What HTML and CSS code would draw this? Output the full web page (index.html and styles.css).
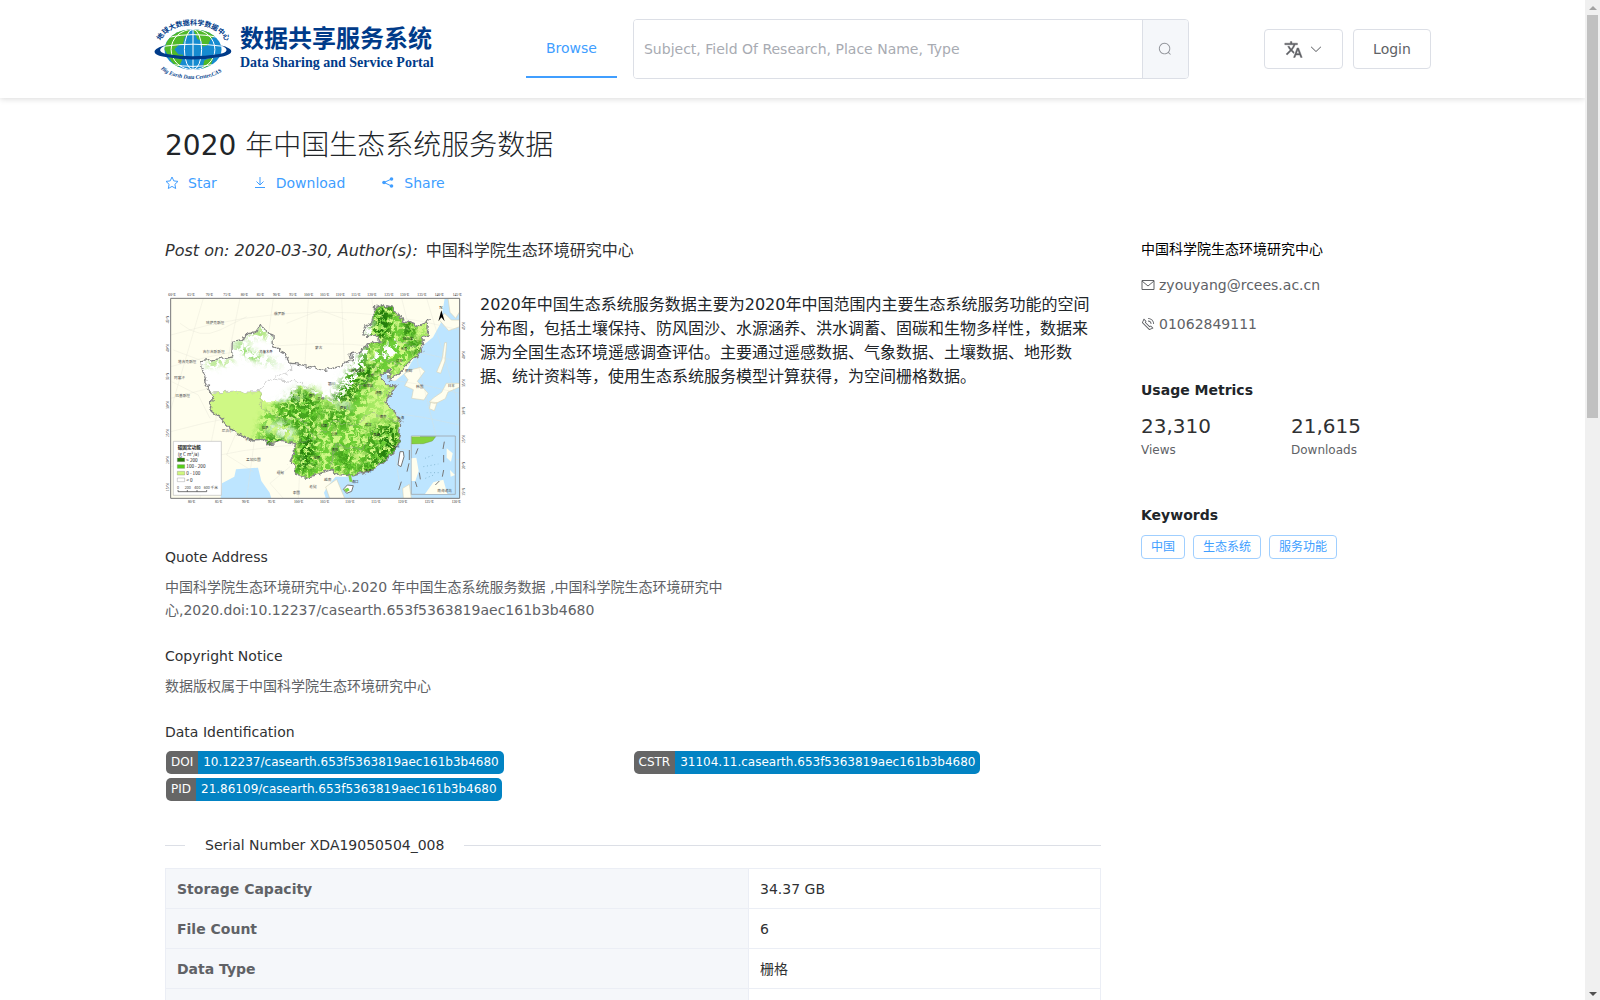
FILE: index.html
```html
<!DOCTYPE html>
<html lang="zh-CN">
<head>
<meta charset="utf-8">
<meta name="viewport" content="width=device-width, initial-scale=1">
<title>2020 年中国生态系统服务数据</title>
<link rel="stylesheet" href="styles.css">
</head>
<body>
<div class="window">
<div class="page">
  <header class="header">
    <div class="header-inner">
      <a class="logo" href="#" aria-label="Data Sharing and Service Portal">
        <svg class="globe" viewBox="0 0 234 184" aria-hidden="true">
          <defs>
            <clipPath id="ball"><ellipse cx="117" cy="92" rx="86" ry="61"/></clipPath>
            <path id="arc-top" d="M20 66 C46 2 188 2 216 68"/>
            <path id="arc-bottom" d="M20 151 C65 191 170 191 215 151"/>
          </defs>
          <g clip-path="url(#ball)">
            <rect width="234" height="184" fill="#168bd0"/>
            <path d="M30 90 45 50 75 34 107 30 104 48 92 54 87 75 72 80 61 92 73 107 87 108 83 126 72 149 52 128Z" fill="#50b929"/>
            <path d="M117 31 156 34 184 51 170 60 163 78 147 84 142 66 130 60Z" fill="#50b929"/>
            <path d="M151 125 180 112 171 139 146 149Z" fill="#50b929"/>
            <g fill="none" stroke="#fff" stroke-width="3"><ellipse cx="117" cy="92" rx="66" ry="61"/><ellipse cx="117" cy="92" rx="26" ry="61"/><path d="M117 28V156M45 55Q117 39 190 55M31 82Q117 70 204 82M34 112Q117 126 202 112M54 137Q117 149 180 137"/></g>
          </g>
          <path d="M37 79C-10 88 -12 110 39 115Q115 129 194 115C245 108 244 89 200 79C226 89 225 102 191 106Q115 119 42 106C9 101 13 87 37 79Z" fill="#003b89"/>
          <text class="globe-cn"><textPath href="#arc-top">地球大数据科学数据中心</textPath></text>
          <text class="globe-en"><textPath href="#arc-bottom">Big Earth Data Center,CAS</textPath></text>
        </svg>
        <span class="brand"><span class="brand-cn">数据共享服务系统</span><span class="brand-en">Data Sharing and Service Portal</span></span>
      </a>
      <nav class="nav"><a href="#">Browse</a></nav>
      <form class="search">
        <input type="text" aria-label="Search" placeholder="Subject, Field Of Research, Place Name, Type">
        <button type="button" aria-label="Search"><svg class="icon" viewBox="0 0 1024 1024"><path fill="currentColor" d="m795.904 750.72 124.992 124.928a32 32 0 0 1-45.248 45.248L750.656 795.904a416 416 0 1 1 45.248-45.248zM480 832a352 352 0 1 0 0-704 352 352 0 0 0 0 704z"/></svg></button>
      </form>
      <div class="account">
        <button class="btn btn-lang" type="button" aria-label="Language">
          <svg class="icon-lang" viewBox="0 0 24 24"><path fill="currentColor" stroke="currentColor" stroke-width=".5" d="m12.87 15.07-2.54-2.51.03-.03A17.52 17.52 0 0 0 14.07 6H17V4h-7V2H8v2H1v2h11.17C11.5 7.92 10.44 9.75 9 11.35 8.07 10.32 7.3 9.19 6.69 8h-2c.73 1.63 1.73 3.17 2.98 4.56l-5.09 5.02L4 19l5-5 3.11 3.11.76-2.04zM18.5 10h-2L12 22h2l1.12-3h4.75L21 22h2l-4.5-12zm-2.62 7 1.62-4.33L19.12 17h-3.24z"/></svg>
          <svg class="icon" viewBox="0 0 1024 1024"><path fill="currentColor" d="M831.872 340.864 512 652.672 192.128 340.864a30.6 30.6 0 0 0-42.752 0 29.1 29.1 0 0 0 0 41.6L489.664 714.24a32 32 0 0 0 44.672 0l340.288-331.712a29.1 29.1 0 0 0 0-41.728 30.6 30.6 0 0 0-42.752 0z"/></svg>
        </button>
        <button class="btn" type="button">Login</button>
      </div>
    </div>
  </header>

  <div class="container">
    <h1 class="title">2020 年中国生态系统服务数据</h1>
    <div class="actions">
      <a href="#"><svg class="icon" viewBox="0 0 14 14"><path fill="none" stroke="currentColor" d="m7 1 1.8 3.9 4.2.5-3.1 2.9.8 4.2L7 10.4l-3.700 2.100.8-4.200L1 5.400l4.200-.5Z"/></svg>Star</a>
      <a href="#"><svg class="icon" viewBox="0 0 14 14"><path fill="none" stroke="currentColor" d="M2 11.500h10M7 1v8M3.500 5.500 7 9l3.500-3.500"/></svg>Download</a>
      <a href="#"><svg class="icon" viewBox="0 0 14 14"><path fill="none" stroke="currentColor" d="M10.500 3 3 6.500l7.500 3.500"/><g fill="currentColor"><circle cx="10.500" cy="3" r="1.800"/><circle cx="3" cy="6.500" r="1.800"/><circle cx="10.500" cy="10" r="1.800"/></g></svg>Share</a>
    </div>

    <div class="columns">
      <main class="main">
        <p class="byline"><em>Post on: 2020-03-30, Author(s):</em><span>中国科学院生态环境研究中心</span></p>
        <div class="summary">
          <svg class="map" viewBox="45 30 903 645" role="img" aria-label="中国生态系统服务空间分布图">
            <defs>
              <clipPath id="frame"><rect x="62" y="55" width="867" height="600"/></clipPath>
              <path id="china" d="m152 245 33-5 30-5 33-8 2-40 30-6 8-20 27-2 15-21 14 8 3 11 22 8 1 35 30 17 19 32 45 7 57 15 50-12 12-10 22-8-4-20 31-4 19-25 41-9-23-16-30-2 2-20 24-16 8-46 28-8 29 7 18 31 44 20 10 7 35-21-6 46-18 20 5 27-26 24-29 29-25 24-17 11-3-31-27 21 9 11 20 19 19-2-24 32-10 19 30 31 20 29-5 41-15 40-35 40-50 25-42 13-47-4-15-16-46 16-30 8-32-6-3-29-17-9 14-27 4-30-37-10-48 14-12-17-38 2-50-27-40-40-31-25 8-38-18-42-9-28Z"/>
              <clipPath id="land"><use href="#china"/></clipPath>
              <filter id="rough" x="-5%" y="-5%" width="110%" height="110%"><feTurbulence type="fractalNoise" baseFrequency=".05" numOctaves="3" seed="4"/><feDisplacementMap in="SourceGraphic" scale="22" xChannelSelector="R" yChannelSelector="G"/></filter>
              <filter id="soft" x="-20%" y="-20%" width="140%" height="140%"><feGaussianBlur in="SourceGraphic" stdDeviation="10" result="b"/><feTurbulence type="fractalNoise" baseFrequency=".06" numOctaves="5" seed="7"/><feColorMatrix values="0 0 0 0 0 0 0 0 0 0 0 0 0 0 0 0 0 0 7 -2.900" result="t"/><feComposite in="b" in2="t" operator="in"/></filter>
              <filter id="speck" x="-20%" y="-20%" width="140%" height="140%"><feGaussianBlur in="SourceGraphic" stdDeviation="9" result="b"/><feTurbulence type="fractalNoise" baseFrequency=".08" numOctaves="5" seed="21"/><feColorMatrix values="0 0 0 0 0 0 0 0 0 0 0 0 0 0 0 0 7 0 0 -2.900" result="t"/><feComposite in="b" in2="t" operator="in"/></filter>
            </defs>
            <g clip-path="url(#frame)">
              <path fill="#fffeee" d="M62 55h867v600H62z"/>
              <path fill="#bde5ff" d="M929 55h-45l-12 75-23 42-25 20-40 55-15 28-34 28-17-4-12-28-32 22 20 28 8 52 38 55-8 70-65 66-68 26-42 0-26 30-9 18 12 38h424ZM212 655l4-45 37-20 5-22 66-5 10 40 25 35 5 17Z"/>
              <path fill="#fffeee" stroke="#d8d5bd" stroke-width="2" d="m777 271-15 12 12 16-10 18 26 12-5 26 37 5 12-20-32-36 22-30-12-12ZM894 55l6 42 17 18 12-20V55ZM868 120l28 32 33-12v-20l-25 0-20-20ZM884 188l-8 50-16 38 12 4 13-37 5-55ZM929 310l-40 0-14 27-25 17-12 12 18 5 30-15 8-20 35-15ZM842 366l-4 20 15 6 8-24ZM560 598l24 57h-45l-12-34ZM760 655l-2-30 20-12 6 42Z"/>
              <g fill="none" stroke="#e2e2d6"><path d="M62 165Q500 35 929 150M62 260Q500 130 929 245M62 355Q500 225 929 340M62 455Q500 330 929 435M62 560Q500 435 929 540M160 55 62 390M270 55 150 655M370 55 290 655M475 55 445 655M575 55l25 600M665 55l90 600M755 55l150 600M830 55l99 330"/><path d="M90 130q60 50 120 20t80-40M70 210l80 30M260 455l-30 70 80 50M420 560l-60 50 40 45M590 120l-80-30-100 40M65 305l80 40 35 70"/></g>
              <g filter="url(#rough)">
                <use href="#china" fill="#fff"/>
                <g clip-path="url(#land)">
                  <path fill="#cff885" d="m180 338 150-2 8 28 70 0 40-45 50 30 60 30 45-60 40-60 10-60 20-60V50h200v200l-80 100v300H400L300 500 170 420Z"/>
                  <path fill="#fff" d="m690 200 45-25 15 40-60 35-30-10Z"/>
                  <g filter="url(#soft)">
                    <path fill="#a6e963" d="m400 370 90-50 50 40 80-20 60-90 10-190h150v200l-100 80 30 320H420l10-120-110-20Z"/>
                    <path fill="#6cce34" d="m340 400 75-65 80 10 30 60 75-60 60-110 30-80-15-90 55 0 20 45 40 30 20 60-50 60-90 50-40 100 40 50 80 0 0 100-110 90-190-15-45-100-100-20ZM248 195l20-5 70 45 70 20-100-15Z"/>
                    <path fill="#8cda4a" d="m290 175 40-35 40 40-50-15-30 25ZM165 245l90-10-20 15-65 10Z"/>
                  </g>
                  <g filter="url(#speck)">
                    <path fill="#45a51d" d="m672 75 60 0-5 100-60 20-18 60-40 80-35 35-30-10 30-60 50-60 40-100ZM380 380l70-60 70 50-20 50 0 150-60 10 5-120-60-30ZM520 380l80 0 0 60-70 10ZM680 430l70-10 0 85-80 70-60 10 40-60-25-40ZM550 500l60 0 0 70-50 10ZM755 115h40v75l30 10-20 50-30-50Z"/>
                    <path fill="#237c08" d="M682 72h40l-5 100-38 15ZM760 125h25v40l-25-5ZM795 185h25v30l-25-5ZM655 255h35l-25 40-35 25-20 50-55-5 30-30 25 5 15-50ZM345 475l50-10 20 35-70 0ZM455 470l35-10-5 110-45 5ZM430 340l55 15-10 20-40-10ZM700 440l40-5 0 55-30 60-50 10 30-50Z"/>
                  </g>
                  <path filter="url(#soft)" fill="#fff" d="m350 430 60 0 35 45-30 0-60-25ZM555 365l50 0 0 15-50 0ZM350 330l60-15 50 40-80 10Z"/>
                  <path fill="none" stroke="#999" stroke-width="2" stroke-opacity=".7" d="m190 338 140-3 20-30 75-35 0-22M330 335l5 50 60 35 60-5 40 60-60 15M375 298l80 10 80 55 60-55 50 10 40-60M500 470l55-45 60 15 50-40 85 25M540 565l20-70 75 15 45-70M640 300l50 40 50-15M690 183l5 50 60 25M730 180l70 25M600 400l-10-60"/>
                </g>
                <use href="#china" fill="none" stroke="#858585" stroke-width="4"/>
              </g>
              <path fill="#fff" stroke="#777" stroke-width="3" d="m580 628 12-13 18 2-5 17-15 6ZM750 515l10 0 2 15-9 30-9-5Z"/>
              <path fill="#7bd246" d="m582 628 12-5 5 8-10 6ZM595 585l8 0 4 20-8 0Z"/>
              <path fill="none" stroke="#777" stroke-width="3" d="m754 605-8 25M777 550l-6 25M778 510v30"/>
            </g>
            <g><path fill="#bde5ff" stroke="#999" stroke-width="2" d="M784 468h132v175H784z"/><path fill="#fffeee" d="M785 468h25v25h-25ZM785 535l14-2 7 40-10 30-11 0ZM890 505l18 15-5 25-13-12ZM825 642l25-35 30-8 12 43ZM900 570l15 15-13 5Z"/><path fill="#84d33d" stroke="#687f40" d="m785 470 72 0-10 13-27 8-35 1Z"/><path fill="none" stroke="#777" stroke-width="3" d="m883 485-4 22M881 525v22M881 570l-4 20M868 603l-12 12M808 578l3 20M796 605l5 16M804 505l-7 18"/><path fill="none" stroke="#6ba5bf" stroke-width="2" stroke-dasharray="3 8" d="m825 535 25-10M820 560l45-8M830 578l36 0M826 595l30-12"/></g>
            <path fill="#fff" stroke="#bbb" stroke-width="2" d="M70 484h144v162H70z"/>
            <g stroke="#777"><path fill="#277d08" d="M82 534h22v11H82z"/><path fill="#56d018" d="M82 554h22v11H82z"/><path fill="#cff77e" d="M82 574h22v11H82z"/><path fill="#fff" d="M82 594h22v11H82z"/></g>
            <g class="map-legend"><text x="83" y="507" class="map-head">碳固定功能</text><text x="83" y="527">(g C m²/a)</text><text x="109" y="545">&gt; 200</text><text x="109" y="565">100 - 200</text><text x="109" y="585">0 - 100</text><text x="109" y="605">&lt; 0</text></g>
            <g class="map-scale"><text x="81" y="626">0</text><text x="104" y="626">200</text><text x="133" y="626">400</text><text x="161" y="626">600 千米</text></g>
            <path fill="none" stroke="#333" stroke-width="2" d="M84 630v5h86v-5M112 630v5M141 630v5"/>
            <path fill="none" stroke="#777" stroke-width="3" d="M62 55h867v600H62z"/>
            <g class="map-place"><text x="372" y="104">俄罗斯</text><text x="168" y="131">哈萨克斯坦</text><text x="495" y="206">蒙古</text><text x="158" y="219">吉尔吉斯斯坦</text><text x="84" y="248">塔吉克斯坦</text><text x="72" y="297">阿富汗</text><text x="76" y="350">巴基斯坦</text><text x="215" y="457">尼泊尔</text><text x="285" y="482">不丹</text><text x="288" y="543">孟加拉国</text><text x="380" y="581">缅甸</text><text x="428" y="641">泰国</text><text x="478" y="624">老挝</text><text x="522" y="604">越南</text><text x="765" y="276">朝鲜</text><text x="798" y="324">韩国</text><text x="893" y="322">日本</text><text x="862" y="637">南海诸岛</text></g>
            <g class="map-city"><text x="328" y="218">乌鲁木齐</text><text x="604" y="276">呼和浩特</text><text x="652" y="292">北京</text><text x="640" y="320">石家庄</text><text x="534" y="316">银川</text><text x="477" y="352">西宁</text><text x="502" y="359">兰州</text><text x="570" y="388">西安</text><text x="675" y="342">济南</text><text x="690" y="413">南京</text><text x="742" y="417">上海</text><text x="738" y="246">沈阳</text><text x="752" y="209">长春</text><text x="759" y="181">哈尔滨</text><text x="512" y="442">成都</text><text x="543" y="466">重庆</text><text x="645" y="438">武汉</text><text x="670" y="468">南昌</text><text x="545" y="513">贵阳</text><text x="490" y="536">昆明</text><text x="728" y="503">福州</text><text x="644" y="577">香港</text><text x="605" y="608">海口</text><text x="335" y="446">拉萨</text></g>
            <g class="map-axis"><text x="55" y="48">60°E</text><text x="112" y="48">65°E</text><text x="167" y="48">70°E</text><text x="220" y="48">75°E</text><text x="272" y="48">80°E</text><text x="320" y="48">85°E</text><text x="369" y="48">90°E</text><text x="418" y="48">95°E</text><text x="462" y="48">100°E</text><text x="510" y="48">105°E</text><text x="557" y="48">110°E</text><text x="604" y="48">115°E</text><text x="652" y="48">120°E</text><text x="703" y="48">125°E</text><text x="750" y="48">130°E</text><text x="802" y="48">135°E</text><text x="854" y="48">140°E</text><text x="908" y="48">145°E</text><text x="114" y="668">80°E</text><text x="195" y="668">85°E</text><text x="276" y="668">90°E</text><text x="354" y="668">95°E</text><text x="432" y="668">100°E</text><text x="510" y="668">105°E</text><text x="586" y="668">110°E</text><text x="664" y="668">115°E</text><text x="744" y="668">120°E</text><text x="824" y="668">125°E</text><text x="905" y="668">130°E</text><text transform="translate(58 130)rotate(-90)">45°N</text><text transform="translate(58 216)rotate(-90)">40°N</text><text transform="translate(58 301)rotate(-90)">35°N</text><text transform="translate(58 387)rotate(-90)">30°N</text><text transform="translate(58 471)rotate(-90)">25°N</text><text transform="translate(58 552)rotate(-90)">20°N</text><text transform="translate(58 633)rotate(-90)">15°N</text><text transform="translate(944 150)rotate(-90)">45°N</text><text transform="translate(944 237)rotate(-90)">40°N</text><text transform="translate(944 321)rotate(-90)">35°N</text><text transform="translate(944 404)rotate(-90)">30°N</text><text transform="translate(944 489)rotate(-90)">25°N</text><text transform="translate(944 568)rotate(-90)">20°N</text><text transform="translate(944 647)rotate(-90)">15°N</text></g>
            <text class="map-north" x="868" y="88">N</text><path d="m865 124 9-33 10 33-10-12Z"/>
          </svg>
          <p class="desc">2020年中国生态系统服务数据主要为2020年中国范围内主要生态系统服务功能的空间分布图，包括土壤保持、防风固沙、水源涵养、洪水调蓄、固碳和生物多样性，数据来源为全国生态环境遥感调查评估。主要通过遥感数据、气象数据、土壤数据、地形数据、统计资料等，使用生态系统服务模型计算获得，为空间栅格数据。</p>
        </div>

        <section class="info">
          <h2>Quote Address</h2>
          <p class="quote">中国科学院生态环境研究中心.2020 年中国生态系统服务数据 ,中国科学院生态环境研究中心,2020.doi:10.12237/casearth.653f5363819aec161b3b4680</p>
        </section>
        <section class="info">
          <h2>Copyright Notice</h2>
          <p>数据版权属于中国科学院生态环境研究中心</p>
        </section>
        <section class="ids">
          <h2>Data Identification</h2>
          <div class="badges">
            <a class="badge" href="#"><span>DOI</span><span>10.12237/casearth.653f5363819aec161b3b4680</span></a>
            <a class="badge" href="#"><span>CSTR</span><span>31104.11.casearth.653f5363819aec161b3b4680</span></a>
            <a class="badge" href="#"><span>PID</span><span>21.86109/casearth.653f5363819aec161b3b4680</span></a>
          </div>
        </section>

        <div class="divider"><span>Serial Number XDA19050504_008</span></div>
        <table class="specs">
          <tr><th scope="row">Storage Capacity</th><td>34.37 GB</td></tr>
          <tr><th scope="row">File Count</th><td>6</td></tr>
          <tr><th scope="row">Data Type</th><td>栅格</td></tr>
          <tr><th scope="row"></th><td></td></tr>
        </table>
      </main>

      <aside class="side">
        <p class="org">中国科学院生态环境研究中心</p>
        <p class="contact"><svg class="icon" viewBox="0 0 14 14"><path fill="none" stroke="currentColor" d="M1 2.500h12v9H1zM1 3l6 5 6-5"/></svg>zyouyang@rcees.ac.cn</p>
        <p class="contact"><svg class="icon" viewBox="0 0 1024 1024"><path fill="currentColor" d="M79.36 432.256 591.744 944.640a32 32 0 0 0 35.200 6.784l253.440-108.544a32 32 0 0 0 9.984-52.032l-153.856-153.920a32 32 0 0 0-36.928-6.016l-69.888 34.944L358.080 394.240l35.008-69.888a32 32 0 0 0-5.952-36.928L233.152 133.568a32 32 0 0 0-52.032 10.048L72.512 397.056a32 32 0 0 0 6.784 35.200zm60.480-29.952 81.536-190.080L325.568 316.480l-24.640 49.216-20.608 41.216 32.576 32.640 271.552 271.552 32.640 32.640 41.216-20.672 49.280-24.576 104.192 104.128-190.080 81.472L139.840 402.304zM512 320v-64a256 256 0 0 1 256 256h-64a192 192 0 0 0-192-192zm0-192V64a448 448 0 0 1 448 448h-64a384 384 0 0 0-384-384z"/></svg>01062849111</p>
        <h3>Usage Metrics</h3>
        <div class="metrics">
          <div><strong>23,310</strong><span>Views</span></div>
          <div><strong>21,615</strong><span>Downloads</span></div>
        </div>
        <h3>Keywords</h3>
        <div class="tags"><span>中国</span><span>生态系统</span><span>服务功能</span></div>
      </aside>
    </div>
  </div>
</div>
<div class="scrollbar" aria-hidden="true"><i class="arrow arrow-up"></i><i class="thumb"></i><i class="arrow arrow-down"></i></div>
</div>
</body>
</html>
```
FILE: styles.css
```css
* { box-sizing: border-box; }

body {
  margin: 0;
  font: 14px/24px "DejaVu Sans", "Noto Sans CJK SC", sans-serif;
  font-weight: 400;
  color: #303133;
  background: #fff;
}

h1, h2, h3, p { margin: 0; font-weight: 400; }
a { color: #409eff; text-decoration: none; }
button, input { font: inherit; }
.icon { width: 14px; height: 14px; flex: none; }

.window { display: flex; height: 100vh; overflow: hidden; }
.page { flex: 1; min-width: 0; }

/* Header */
.header { box-shadow: 0 1px 6px rgba(0, 0, 0, .15); }
.header-inner {
  display: flex;
  align-items: center;
  max-width: 1297px;
  height: 98px;
  margin: 0 auto;
  padding: 0 10px;
}
.logo { display: flex; align-items: center; width: 372px; color: #003b89; }
.globe { width: 78px; height: 61px; margin-right: 8px; overflow: visible; }
.globe-cn { font: 700 21px "Noto Sans CJK SC", sans-serif; fill: #003b89; }
.globe-en { font: italic 700 17px "Liberation Serif", serif; fill: #003b89; }
.brand { display: flex; flex-direction: column; white-space: nowrap; }
.brand-cn { font: 700 24px/28px "Noto Sans CJK SC", sans-serif; }
.brand-en { font: 700 14px/24px "Liberation Serif", serif; }
.nav { margin-right: 16px; }
.nav a {
  display: block;
  height: 58px;
  padding: 0 20px;
  line-height: 56px;
  border-bottom: 2px solid #409eff;
}
.search {
  display: flex;
  flex: 0 1 556px;
  height: 60px;
  border: 1px solid #dcdfe6;
  border-radius: 4px;
  overflow: hidden;
}
.search input { flex: 1; min-width: 0; border: 0; padding: 0 10px; outline: 0; }
.search input::placeholder { color: #a8abb2; opacity: 1; }
.search button {
  display: grid;
  place-items: center;
  width: 46px;
  padding: 0;
  border: 0;
  border-left: 1px solid #dcdfe6;
  background: #f5f7fa;
  color: #909399;
}
.account { display: flex; gap: 10px; margin-left: auto; }
.btn {
  display: flex;
  align-items: center;
  justify-content: center;
  gap: 6px;
  width: 78px;
  height: 40px;
  padding: 0;
  border: 1px solid #dcdfe6;
  border-radius: 4px;
  background: #fff;
  color: #606266;
}
.btn-lang { width: 79px; }
.icon-lang { width: 19px; height: 19px; }

/* Record */
.container { max-width: 1297px; margin: 0 auto; padding: 28px 10px 0 21px; }
.title { font-size: 28px; line-height: 40px; color: #212529; }
.actions { display: flex; gap: 36px; margin-top: 5px; }
.actions a { display: flex; align-items: center; gap: 9px; }
.columns { display: flex; gap: 40px; margin-top: 40px; }
.main { flex: 0 1 936px; min-width: 0; }
.byline { display: flex; gap: 8px; font-size: 16px; line-height: 32px; }
.title { font-family: "DejaVu Sans", "Noto Sans CJK SC Light", "Noto Sans CJK SC", sans-serif; }
.summary { display: flex; gap: 14px; margin-top: 23px; }
.map { flex: none; width: 301px; height: 215px; }
.desc { padding: 3px 4px 0 0; font-size: 16px; line-height: 24px; color: #212529; }

.map-legend { font: 14px "Noto Sans CJK SC", sans-serif; fill: #222; }
.map-legend .map-head { font-weight: 700; }
.map-scale { font: 11px "Noto Sans CJK SC", sans-serif; fill: #444; }
.map-place { font: 11px "Noto Sans CJK SC", sans-serif; fill: #555; }
.map-city { font: 10px "Noto Sans CJK SC", sans-serif; fill: #222; }
.map-axis { font: 11px "Liberation Serif", serif; fill: #222; }
.map-north { font: 14px "Liberation Serif", serif; }

.info { margin-top: 22px; }
.summary + .info { margin-top: 40px; }
.info p { margin-top: 7px; line-height: 23px; color: #606266; }
.info .quote { max-width: 564px; }
.ids { margin-top: 22px; }
.info h2, .ids h2 { font-size: 14px; }
.badges {
  display: grid;
  grid-template-columns: 1fr 1fr;
  gap: 4px 0;
  margin-top: 7px;
  padding-left: 1px;
}
.badge {
  display: flex;
  justify-self: start;
  border-radius: 5px;
  overflow: hidden;
  font-size: 12px;
  line-height: 23px;
  color: #fff;
  white-space: nowrap;
}
.badge span { padding: 0 5px; background: #0283c3; }
.badge span:first-child { background: #666; }

.divider { display: flex; align-items: center; gap: 20px; margin-top: 32px; }
.divider::before, .divider::after { content: ""; width: 20px; height: 1px; background: #dcdfe6; }
.divider::after { flex: 1; }

.specs { width: 100%; margin-top: 11px; border-collapse: collapse; table-layout: fixed; }
.specs th, .specs td { height: 40px; padding: 0 11px; border: 1px solid #ebeef5; text-align: left; }
.specs th { width: 583px; background: #f5f7fa; color: #606266; font-weight: 700; }

/* Sidebar */
.side { flex: 1; min-width: 0; }
.org { line-height: 28px; color: #000; }
.contact { display: flex; align-items: center; gap: 4px; margin-top: 10px; color: #606266; }
.contact + .contact { margin-top: 15px; }
.side h3 { margin-top: 42px; font-size: 14px; font-weight: 700; color: #212529; }
.metrics { display: grid; grid-template-columns: 150px 150px; margin-top: 10px; }
.metrics strong { display: block; font-size: 20px; line-height: 28px; font-weight: 400; }
.metrics span { display: block; font-size: 12px; line-height: 20px; color: #606266; }
.metrics + h3 { margin-top: 43px; }
.tags { display: flex; gap: 8px; margin-top: 8px; }
.tags span {
  padding: 0 9px;
  border: 1px solid #a0cfff;
  border-radius: 4px;
  font-size: 12px;
  line-height: 22px;
  color: #409eff;
}

/* Scrollbar */
.scrollbar { display: flex; flex-direction: column; align-items: center; width: 15px; background: #f0f0f0; }
.thumb { flex: 0 0 403px; width: 11px; margin-top: 5px; background: #c1c1c1; }
.arrow { border: 4px solid transparent; }
.arrow-up { margin-top: 2px; border-bottom-color: #a3a3a3; }
.arrow-down { margin-top: auto; border-top-color: #505050; }
```
